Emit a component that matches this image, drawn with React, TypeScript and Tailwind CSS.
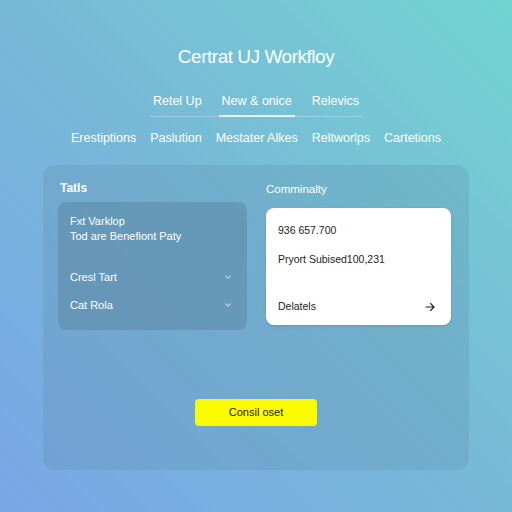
import React from "react";

const tabs = ["Retel Up", "New & onice", "Relevics"];
const links = ["Erestiptions", "Paslution", "Mestater Alkes", "Reltworlps", "Cartetions"];

const Chevron = () => (
  <svg width="10" height="10" viewBox="0 0 24 24" fill="none" stroke="currentColor" strokeWidth="2.5" strokeLinecap="round" strokeLinejoin="round">
    <path d="M6 9l6 6 6-6" />
  </svg>
);

const Arrow = () => (
  <svg width="14" height="14" viewBox="0 0 24 24" fill="none" stroke="currentColor" strokeWidth="2" strokeLinecap="round" strokeLinejoin="round">
    <path d="M5 12h14M13 6l6 6-6 6" />
  </svg>
);

const App = () => {
  return (
    <div
      className="w-[512px] h-[512px] overflow-hidden bg-gradient-to-tr from-[#78a6e6] via-[#78b8d8] to-[#72d4d0] flex flex-col items-center"
      style={{ fontFamily: '"Liberation Sans", Arial, sans-serif' }}
    >
      <h1 className="mt-[45px] text-[19px] leading-6 text-white tracking-tight">Certrat UJ Workfloy</h1>

      <div className="mt-[23px] flex flex-col items-center">
        <div className="flex gap-[14px] text-[12.5px] text-white px-[6px]">
          {tabs.map((t, i) => (
            <div key={t} className={"px-[3px] pb-[4px] " + (i === 1 ? "border-b-2 border-white/80" : "")}>
              {t}
            </div>
          ))}
        </div>
        <div className="h-px w-[212px] bg-white/25 -mt-[1px]" />
      </div>

      <div className="mt-[12px] flex gap-[14px] text-[12.5px] text-white">
        {links.map((l) => (
          <span key={l}>{l}</span>
        ))}
      </div>

      <div className="mt-[17px] w-[426px] h-[305px] rounded-[12px] bg-[#5a8aa8]/25 px-[15px] pt-[15px] flex flex-col">
        <div className="flex gap-[19px]">
          <div className="w-[189px] flex flex-col">
            <div className="text-[12px] font-bold text-white pl-[2px] leading-4">Tatls</div>
            <div className="mt-[6px] h-[128px] rounded-[8px] bg-[#5f8ca8]/60 px-[12px] pt-[12px] text-white text-[11px]">
              <div className="leading-[15px]">Fxt Varklop</div>
              <div className="leading-[15px]">Tod are Benefiont Paty</div>
              <div className="mt-[25px] flex items-center justify-between pr-[2px]">
                <span>Cresl Tart</span>
                <span className="text-white/70"><Chevron /></span>
              </div>
              <div className="mt-[12px] flex items-center justify-between pr-[2px]">
                <span>Cat Rola</span>
                <span className="text-white/70"><Chevron /></span>
              </div>
            </div>
          </div>
          <div className="w-[185px] flex flex-col">
            <div className="text-[11.5px] text-white leading-4 pt-[1px]">Comminalty</div>
            <div className="mt-[11px] h-[117px] rounded-[8px] bg-white px-[12px] pt-[15px] text-[10.5px] text-[#222] flex flex-col shadow-sm">
              <div>936 657.700</div>
              <div className="mt-[14px]">Pryort Subised100,231</div>
              <div className="mt-auto mb-[10px] flex items-center justify-between pr-[2px]">
                <span>Delatels</span>
                <Arrow />
              </div>
            </div>
          </div>
        </div>
        <div className="mt-[69px] flex justify-center">
          <button className="w-[122px] h-[27px] rounded-[4px] bg-[#fbfb00] text-[11px] text-[#222]">Consil oset</button>
        </div>
      </div>
    </div>
  );
};

export default App;
